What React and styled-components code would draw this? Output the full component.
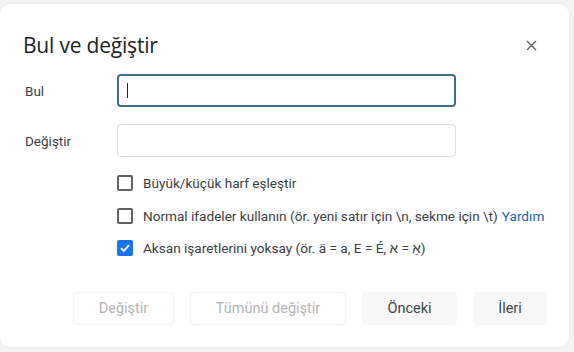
import React from "react";
import styled, { createGlobalStyle } from "styled-components";

const Global = createGlobalStyle`
  html, body { margin: 0; padding: 0; background: #f3f3f3; }
  body { font-family: Roboto, "Noto Sans", Arial, sans-serif; }
  * { box-sizing: border-box; }
`;

const Page = styled.div`
  width: 574px;
  height: 352px;
  padding: 4px 5px 5px 0;
`;

const Card = styled.div`
  height: 343px;
  background: #fff;
  border-radius: 10px;
  box-shadow: 0 0 3px rgba(0, 0, 0, 0.06);
  padding: 27px 22px 0 23px;
  display: flex;
  flex-direction: column;
`;

const Header = styled.div`
  display: flex;
  align-items: center;
  justify-content: space-between;
  height: 28px;
`;

const Title = styled.h1`
  margin: 0;
  font-family: "Open Sans", Roboto, sans-serif;
  font-weight: 400;
  font-size: 21px;
  letter-spacing: -0.2px;
  color: #202124;
`;

const Close = styled.button`
  border: 0;
  background: none;
  padding: 0;
  width: 16px;
  height: 16px;
  margin-right: 8px;
  display: flex;
  align-items: center;
  justify-content: center;
  cursor: pointer;
`;

const Fields = styled.div`
  margin-top: 15px;
  display: grid;
  grid-template-columns: 94px 339px;
  row-gap: 17px;
  align-items: center;
`;

const Label = styled.label`
  font-size: 13.5px;
  color: #3c4043;
  padding-left: 2px;
`;

const Input = styled.div`
  height: 33px;
  border-radius: 4px;
  border: ${(p) => (p.$focused ? "2px solid #3e6e8a" : "1px solid #dadce0")};
  display: flex;
  align-items: center;
  padding-left: 8px;
`;

const Caret = styled.span`
  width: 1px;
  height: 15px;
  background: #202124;
`;

const Options = styled.div`
  margin-top: 18px;
  margin-left: 94px;
  display: flex;
  flex-direction: column;
  gap: 16.5px;
`;

const Option = styled.label`
  display: flex;
  align-items: center;
  gap: 10px;
  height: 16px;
  font-size: 13.6px;
  color: #3c4043;
  white-space: nowrap;
`;

const Box = styled.span`
  width: 16px;
  height: 16px;
  flex: none;
  border-radius: 2px;
  border: ${(p) => (p.$checked ? "none" : "2px solid #5f6368")};
  background: ${(p) => (p.$checked ? "#1a73e8" : "#fff")};
  display: flex;
  align-items: center;
  justify-content: center;
`;

const Link = styled.a`
  color: #1a5fb4;
  text-decoration: none;
  margin-left: 4px;
`;

const Footer = styled.div`
  margin-top: 36px;
  display: flex;
  justify-content: flex-end;
  gap: 16px;
`;

const Button = styled.button`
  height: 33px;
  width: ${(p) => p.$w}px;
  padding: 0;
  border-radius: 4px;
  font-family: Roboto, sans-serif;
  font-size: 14.5px;
  border: 1px solid ${(p) => (p.$disabled ? "#f2f2f2" : "#f7f7f7")};
  background: ${(p) => (p.$disabled ? "#fff" : "#f8f8f8")};
  color: ${(p) => (p.$disabled ? "#b3b3b3" : "#444")};
`;

const Check = () => (
  <svg width="12" height="12" viewBox="0 0 12 12">
    <path d="M2 6.2 L4.8 9 L10 3.2" fill="none" stroke="#fff" strokeWidth="1.8" />
  </svg>
);

export default function App() {
  return (
    <>
      <Global />
      <Page>
        <Card>
          <Header>
            <Title>Bul ve değiştir</Title>
            <Close aria-label="Kapat">
              <svg width="11" height="11" viewBox="0 0 11 11">
                <path d="M1 1 L10 10 M10 1 L1 10" stroke="#5f6368" strokeWidth="1.4" />
              </svg>
            </Close>
          </Header>
          <Fields>
            <Label>Bul</Label>
            <Input $focused>
              <Caret />
            </Input>
            <Label>Değiştir</Label>
            <Input />
          </Fields>
          <Options>
            <Option>
              <Box />
              Büyük/küçük harf eşleştir
            </Option>
            <Option>
              <Box />
              <span>
                Normal ifadeler kullanın (ör. yeni satır için \n, sekme için \t)
                <Link>Yardım</Link>
              </span>
            </Option>
            <Option>
              <Box $checked>
                <Check />
              </Box>
              <span>
                Aksan işaretlerini yoksay (ör. ä = a, E = É, <bdo dir="ltr">א = אַ</bdo>)
              </span>
            </Option>
          </Options>
          <Footer>
            <Button $disabled $w={101}>Değiştir</Button>
            <Button $disabled $w={156}>Tümünü değiştir</Button>
            <Button $w={95}>Önceki</Button>
            <Button $w={74}>İleri</Button>
          </Footer>
        </Card>
      </Page>
    </>
  );
}
